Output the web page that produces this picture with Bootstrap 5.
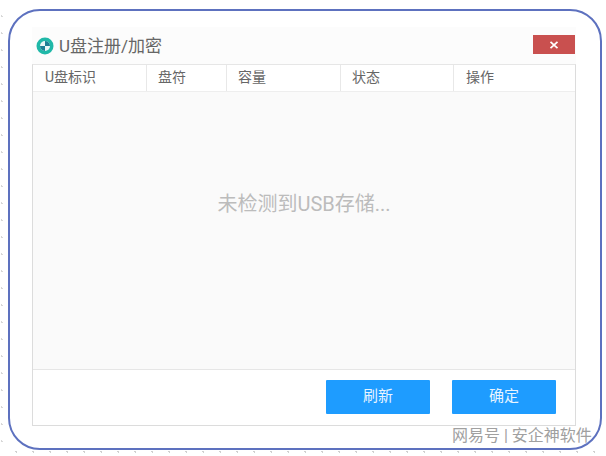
<!doctype html>
<html lang="zh-CN">
<head>
<meta charset="utf-8">
<title>U盘注册/加密</title>
<link rel="stylesheet" href="https://cdn.jsdelivr.net/npm/bootstrap@5.3.0/dist/css/bootstrap.min.css">
<style>
html,body{height:100%;}
body{width:606px;height:456px;overflow:hidden;background:#fff;font-family:"Roboto","Noto Sans CJK SC",sans-serif;color:#666;position:relative;}
.specks-b{height:3px;background:radial-gradient(circle,#d0d0d0 0,#d0d0d0 1px,transparent 1px) 0 0/17px 3px repeat-x;}
.specks-l{position:absolute;left:0;top:0;width:3px;height:456px;background:radial-gradient(circle,#d8d8d8 0,#d8d8d8 1px,transparent 1px) 0 8px/3px 17px repeat-y;}
.page-pad{padding:9px 4px 0 8px;}
.frame-box{width:594px;height:441px;border:2px solid #5d71bf;border-radius:32px;background:#fff;padding:16px 24px 22px 22px;}
.dlg{height:399px;background:#fff;}
.dlg-title{height:37px;background:#fcfcfc;padding-right:1px;font-size:17px;color:#666;}
.dlg-brand{gap:5px;line-height:20px;}
.btn-x{width:42px;height:19px;padding:0;border:0;border-radius:0;background:#c9504f;display:flex;align-items:center;justify-content:center;margin-bottom:2px;}
.dlg-body{height:362px;border:1px solid #dcdcdc;border-top-color:#e6e6e6;}
.thead-row{height:27px;flex:none;font-size:14px;color:#666;border-bottom:1px solid #eee;background:#fff;}
.thead-cell{border-right:1px solid #e8e8e8;padding-left:12px;line-height:25px;height:26px;}
.thead-cell:last-child{border-right:0;}
.w1{width:114px;}.w2{width:80px;padding-left:11px;}.w3{width:114px;padding-left:11px;}.w4{width:113px;padding-left:11px;}
.empty-pane{height:277px;flex:none;background:#fafafa;font-size:20px;color:#bcbcbc;padding-bottom:54px;}
.foot-pane{height:56px;flex:none;border-top:1px solid #e6e6e6;gap:22px;padding-right:19px;padding-bottom:2px;}
.btn-sky{width:104px;height:34px;padding:0;border:0;border-radius:1px;background:#1e9cff;color:#e8f4ff;font-size:15px;}
.wm{position:absolute;left:452px;top:427px;font-size:16px;line-height:18px;color:#a0a0a0;white-space:nowrap;text-shadow:0 0 2px #fff;}
</style>
</head>
<body>
<div class="specks-l"></div>
<div class="page-pad">
  <div class="frame-box">
    <div class="dlg">
      <div class="dlg-title d-flex align-items-center justify-content-between">
        <div class="dlg-brand d-flex align-items-center ps-1">
          <svg width="18" height="18" viewBox="0 0 18 18" aria-hidden="true">
            <circle cx="9" cy="9" r="8.5" fill="#20b8a8"/>
            <circle cx="9" cy="9" r="5" fill="#e8f7f6"/>
            <path d="M9 4 A5 5 0 0 1 14 9 L9 9Z M9 9 L9 14 A5 5 0 0 1 4 9Z" fill="#1c7f94"/>
          </svg>
          <span>U盘注册/加密</span>
        </div>
        <button type="button" class="btn-x" aria-label="关闭">
          <svg width="10" height="8" viewBox="0 0 10 8"><path d="M1.5 .8 8.5 7.2M8.5 .8 1.5 7.2" stroke="#fff" stroke-width="1.7" fill="none"/></svg>
        </button>
      </div>
      <div class="dlg-body d-flex flex-column">
        <div class="thead-row d-flex">
          <div class="thead-cell w1">U盘标识</div>
          <div class="thead-cell w2">盘符</div>
          <div class="thead-cell w3">容量</div>
          <div class="thead-cell w4">状态</div>
          <div class="thead-cell flex-fill">操作</div>
        </div>
        <div class="empty-pane d-flex align-items-center justify-content-center">未检测到USB存储...</div>
        <div class="foot-pane d-flex align-items-center justify-content-end">
          <button type="button" class="btn btn-sky">刷新</button>
          <button type="button" class="btn btn-sky">确定</button>
        </div>
      </div>
    </div>
  </div>
  <div class="specks-b"></div>
</div>
<div class="wm">网易号 | 安企神软件</div>
<script src="https://cdn.jsdelivr.net/npm/bootstrap@5.3.0/dist/js/bootstrap.bundle.min.js"></script>
</body>
</html>
